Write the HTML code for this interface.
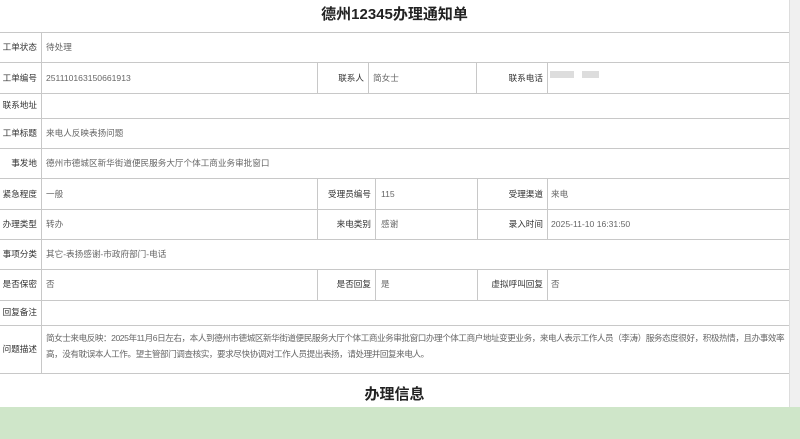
<!DOCTYPE html>
<html><head><meta charset="utf-8"><style>
body{margin:0;width:800px;height:439px;overflow:hidden;background:#fff;font-family:"Liberation Sans","Noto Sans CJK SC",sans-serif;position:relative}
.t{position:absolute;left:0;top:3px;width:789px;text-align:center;font-size:15px;font-weight:bold;color:#222}
.h{position:absolute;left:0;width:789px;height:0;border-top:1px solid #c8c8c8}
.v{position:absolute;width:0;border-left:1px solid #c8c8c8}
.c{position:absolute;font-size:8.6px;color:#666;white-space:nowrap;line-height:12px}
.l{color:#333;text-align:right}
.g{position:absolute;left:0;top:407px;width:800px;height:32px;background:#cfe6c9}
.sb{position:absolute;left:789px;top:0;width:11px;height:417px;background:#f0f0f0;border-left:1px solid #ddd}
.ph{position:absolute;background:#ddd;height:7px}
</style></head><body>
<div class="t">德州12345办理通知单</div>
<div class="h" style="top:32px"></div><div class="h" style="top:62px"></div><div class="h" style="top:93px"></div><div class="h" style="top:118px"></div><div class="h" style="top:148px"></div><div class="h" style="top:178px"></div><div class="h" style="top:209px"></div><div class="h" style="top:239px"></div><div class="h" style="top:269px"></div><div class="h" style="top:300px"></div><div class="h" style="top:325px"></div><div class="h" style="top:373px"></div>
<div class="v" style="left:41px;top:32px;height:341px"></div>
<div class="v" style="left:317px;top:62px;height:31px"></div><div class="v" style="left:368px;top:62px;height:31px"></div><div class="v" style="left:476px;top:62px;height:31px"></div><div class="v" style="left:547px;top:62px;height:31px"></div>
<div class="v" style="left:317px;top:178px;height:61px"></div><div class="v" style="left:375px;top:178px;height:61px"></div><div class="v" style="left:477px;top:178px;height:61px"></div><div class="v" style="left:547px;top:178px;height:61px"></div>
<div class="v" style="left:317px;top:269px;height:31px"></div><div class="v" style="left:375px;top:269px;height:31px"></div><div class="v" style="left:477px;top:269px;height:31px"></div><div class="v" style="left:547px;top:269px;height:31px"></div>

<div class="c l" style="left:0;width:37px;top:41px">工单状态</div><div class="c" style="left:46px;top:41px">待处理</div>
<div class="c l" style="left:0;width:37px;top:72px">工单编号</div><div class="c" style="left:46px;top:72px">251110163150661913</div>
<div class="c l" style="left:317px;width:47px;top:72px">联系人</div><div class="c" style="left:373px;top:72px">简女士</div>
<div class="c l" style="left:476px;width:67px;top:72px">联系电话</div>
<div class="ph" style="left:550px;top:71px;width:24px"></div><div class="ph" style="left:582px;top:71px;width:17px"></div>
<div class="c l" style="left:0;width:37px;top:99px">联系地址</div>
<div class="c l" style="left:0;width:37px;top:127px">工单标题</div><div class="c" style="left:46px;top:127px">来电人反映表扬问题</div>
<div class="c l" style="left:0;width:37px;top:157px">事发地</div><div class="c" style="left:46px;top:157px">德州市德城区新华街道便民服务大厅个体工商业务审批窗口</div>
<div class="c l" style="left:0;width:37px;top:188px">紧急程度</div><div class="c" style="left:46px;top:188px">一般</div>
<div class="c l" style="left:317px;width:54px;top:188px">受理员编号</div><div class="c" style="left:381px;top:188px">115</div>
<div class="c l" style="left:477px;width:66px;top:188px">受理渠道</div><div class="c" style="left:551px;top:188px">来电</div>
<div class="c l" style="left:0;width:37px;top:218px">办理类型</div><div class="c" style="left:46px;top:218px">转办</div>
<div class="c l" style="left:317px;width:54px;top:218px">来电类别</div><div class="c" style="left:381px;top:218px">感谢</div>
<div class="c l" style="left:477px;width:66px;top:218px">录入时间</div><div class="c" style="left:551px;top:218px">2025-11-10 16:31:50</div>
<div class="c l" style="left:0;width:37px;top:248px">事项分类</div><div class="c" style="left:46px;top:248px">其它-表扬感谢-市政府部门-电话</div>
<div class="c l" style="left:0;width:37px;top:278px">是否保密</div><div class="c" style="left:46px;top:278px">否</div>
<div class="c l" style="left:317px;width:54px;top:278px">是否回复</div><div class="c" style="left:381px;top:278px">是</div>
<div class="c l" style="left:477px;width:66px;top:278px">虚拟呼叫回复</div><div class="c" style="left:551px;top:278px">否</div>
<div class="c l" style="left:0;width:37px;top:306px">回复备注</div>
<div class="c l" style="left:0;width:37px;top:343px">问题描述</div>
<div class="c" style="left:46px;top:330px;line-height:16px;white-space:normal;width:742px;letter-spacing:-0.45px">简女士来电反映：2025年11月6日左右，本人到德州市德城区新华街道便民服务大厅个体工商业务审批窗口办理个体工商户地址变更业务，来电人表示工作人员（李涛）服务态度很好，积极热情，且办事效率高，没有耽误本人工作。望主管部门调查核实，要求尽快协调对工作人员提出表扬，请处理并回复来电人。</div>
<div class="t" style="top:383px;font-size:15px">办理信息</div>
<div class="sb"></div>
<div class="g"></div>
</body></html>
